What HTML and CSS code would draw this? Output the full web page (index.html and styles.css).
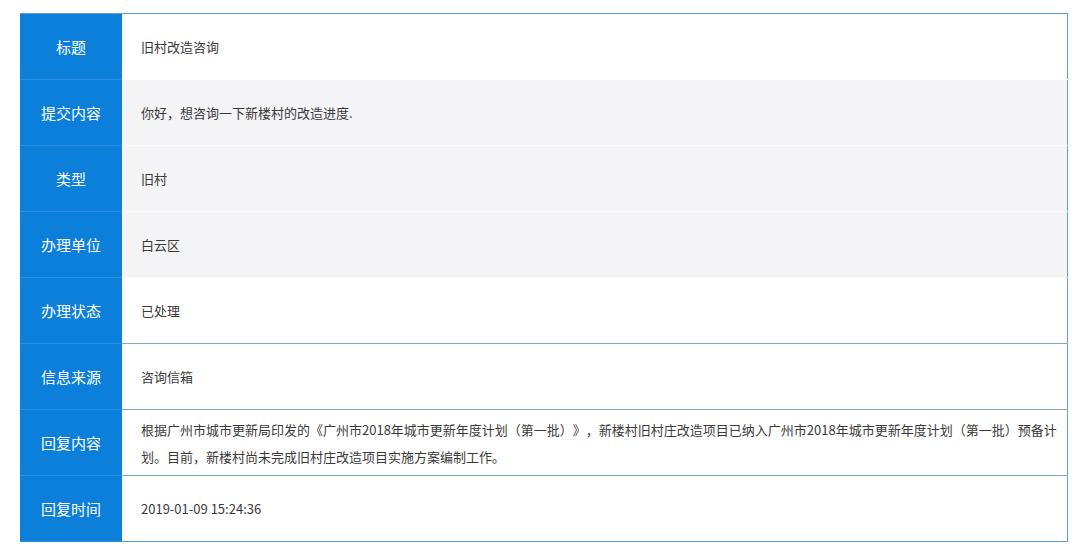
FILE: index.html
```html
<!DOCTYPE html>
<html lang="zh-CN">
<head>
    <meta charset="UTF-8">
    <title>咨询详情</title>
    <link rel="stylesheet" href="styles.css">
</head>
<body>

<table class="detail">
    <tr class="plain">
        <th>标题</th>
        <td>旧村改造咨询</td>
    </tr>
    <tr class="shade">
        <th>提交内容</th>
        <td>你好，想咨询一下新楼村的改造进度.</td>
    </tr>
    <tr class="shade">
        <th>类型</th>
        <td>旧村</td>
    </tr>
    <tr class="shade">
        <th>办理单位</th>
        <td>白云区</td>
    </tr>
    <tr class="lined">
        <th>办理状态</th>
        <td>已处理</td>
    </tr>
    <tr class="lined">
        <th>信息来源</th>
        <td>咨询信箱</td>
    </tr>
    <tr class="lined">
        <th>回复内容</th>
        <td class="long">根据广州市城市更新局印发的《广州市2018年城市更新年度计划（第一批）》，新楼村旧村庄改造项目已纳入广州市2018年城市更新年度计划（第一批）预备计划。目前，新楼村尚未完成旧村庄改造项目实施方案编制工作。</td>
    </tr>
    <tr class="lined">
        <th>回复时间</th>
        <td>2019-01-09 15:24:36</td>
    </tr>
</table>

</body>
</html>
```

FILE: styles.css
```css
body {
    margin: 0;
    background-color: #fff;
    font-family: "Noto Sans CJK SC", "Noto Sans", sans-serif;
    text-spacing-trim: space-all;
}

.detail {
    margin: 13px 0 0 20px;
    width: 1048px;
    border-collapse: collapse;
    border-top: 1px solid #5d9fd2;
    border-right: 1px solid #5d9fd2;
    border-bottom: 1px solid #5d9fd2;
}

.detail tr {
    height: 66px;
}

.detail th {
    width: 102px;
    padding: 0;
    background-color: #0b7fda;
    color: #fff;
    font-size: 15px;
    font-weight: normal;
    text-align: center;
    border-bottom: 1px solid #2b90e2;
}

.detail td {
    padding: 0 8px 0 19px;
    font-size: 13px;
    color: #3a3a3a;
    text-align: left;
}

.detail .plain td {
    background-color: #fff;
    border-bottom: 1px solid #fff;
}

.detail .shade td {
    background-color: #f4f3f6;
    border-bottom: 1px solid #f9f8fa;
}

.detail .lined td {
    background-color: #fff;
    border-top: 1px solid #7fa9d2;
}

.detail td.long {
    line-height: 27px;
}
```
